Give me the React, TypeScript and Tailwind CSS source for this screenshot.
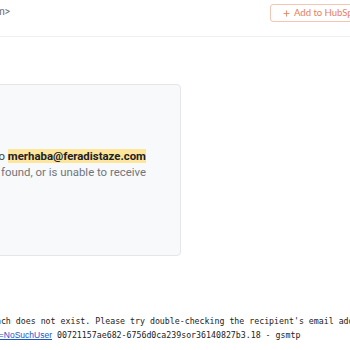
import { Plus } from "lucide-react";

export default function App() {
  return (
    <div className="w-[350px] h-[350px] overflow-hidden bg-white font-['Roboto',sans-serif]">
      {/* Header */}
      <div className="flex h-[37px] border-b border-[#efefef]">
        <div className="w-[270px] shrink-0 flex">
          <div className="w-[10px] shrink-0 flex justify-end pt-[6px]">
            <span className="whitespace-nowrap text-[10px] leading-[12px] text-[#5f6368]">
              &lt;mailer-daemon@googlemail.com&gt;
            </span>
          </div>
        </div>
        <button className="mt-[4px] h-[18px] shrink-0 w-[100px] flex items-center gap-[3px] pl-[11px] rounded-[3px] border border-[#f3c6b3] text-[#ea7c5b] text-[9.5px] font-['Lato',sans-serif] whitespace-nowrap">
          <Plus size={9} strokeWidth={2.2} />
          <span>Add to HubSpot</span>
        </button>
      </div>

      {/* Bounce card */}
      <div className="-ml-[219px] w-[400px] h-[172px] mt-[47px] rounded-[4px] border border-[#e6e6e6] bg-[#f8f9fa] pt-[63px] pr-[34px]">
        <div className="flex justify-end whitespace-nowrap text-[11.4px] leading-[16px] text-[#3c4043]">
          <span>
            Your message wasn't delivered to{" "}
            <span className="bg-[#fde59c] font-bold text-[#202124]">merhaba@feradistaze.com</span>
          </span>
        </div>
        <div className="flex justify-end whitespace-nowrap text-[11.4px] leading-[16px] text-[#70757a]">
          <span>because the address couldn't be found, or is unable to receive</span>
        </div>
      </div>

      {/* Technical details */}
      <div className="mt-[59px] font-['DejaVu_Sans_Mono',monospace] text-[8.25px] leading-[13.5px] text-[#222]">
        <div className="-ml-[14px] whitespace-nowrap">
          reach does not exist. Please try double-checking the recipient's email address for typos
        </div>
        <div className="flex whitespace-nowrap">
          <div className="w-[52px] shrink-0 flex justify-end">
            <a className="font-['Liberation_Sans',sans-serif] text-[8.5px] text-[#1a56c9] underline">
              https://support.google.com/mail/?p=NoSuchUser
            </a>
          </div>
          <span className="ml-[5px]">00721157ae682-6756d0ca239sor36140827b3.18 - gsmtp</span>
        </div>
      </div>
    </div>
  );
}
